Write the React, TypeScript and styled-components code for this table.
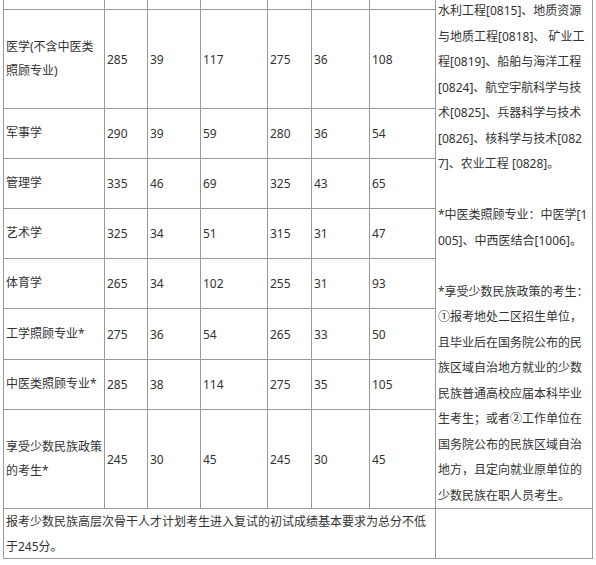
import React from "react";
import styled, { createGlobalStyle } from "styled-components";

const GlobalStyle = createGlobalStyle`
  html, body {
    margin: 0;
    padding: 0;
    background: #ffffff;
  }
  body {
    font-family: "Noto Sans", "Noto Sans CJK SC", sans-serif;
    color: #333333;
  }
`;

type Row = { name: string[]; scores: string[] };

const rows: Row[] = [
  { name: ["医学(不含中医类", "照顾专业)"], scores: ["285", "39", "117", "275", "36", "108"] },
  { name: ["军事学"], scores: ["290", "39", "59", "280", "36", "54"] },
  { name: ["管理学"], scores: ["335", "46", "69", "325", "43", "65"] },
  { name: ["艺术学"], scores: ["325", "34", "51", "315", "31", "47"] },
  { name: ["体育学"], scores: ["265", "34", "102", "255", "31", "93"] },
  { name: ["工学照顾专业*"], scores: ["275", "36", "54", "265", "33", "50"] },
  { name: ["中医类照顾专业*"], scores: ["285", "38", "114", "275", "35", "105"] },
  { name: ["享受少数民族政策", "的考生*"], scores: ["245", "30", "45", "245", "30", "45"] },
];

const notes: string[] = [
  "水利工程[0815]、地质资源",
  "与地质工程[0818]、 矿业工",
  "程[0819]、船舶与海洋工程",
  "[0824]、航空宇航科学与技",
  "术[0825]、兵器科学与技术",
  "[0826]、核科学与技术[082",
  "7]、农业工程 [0828]。",
  "",
  "*中医类照顾专业：中医学[1",
  "005]、中西医结合[1006]。",
  "",
  "*享受少数民族政策的考生：",
  "①报考地处二区招生单位，",
  "且毕业后在国务院公布的民",
  "族区域自治地方就业的少数",
  "民族普通高校应届本科毕业",
  "生考生；或者②工作单位在",
  "国务院公布的民族区域自治",
  "地方，且定向就业原单位的",
  "少数民族在职人员考生。",
];

const App: React.FC = () => {
  return (
    <>
      <GlobalStyle />
      <Sheet>
        {/* the row above is cut off by the crop, only its last pixels show */}
        {Array.from({ length: 7 }).map((_, i) => (
          <Cell key={`top-${i}`} />
        ))}
        <NotesCell>
          {notes.map((line, i) => (
            <NoteLine key={i}>{line || "\u00a0"}</NoteLine>
          ))}
        </NotesCell>

        {rows.map((row) => (
          <React.Fragment key={row.name.join("")}>
            <Cell $align="center">
              <CellText $lineHeight={24.5}>
                {row.name.map((part, i) => (
                  <span key={i}>
                    {part}
                    {i < row.name.length - 1 && <br />}
                  </span>
                ))}
              </CellText>
            </Cell>
            {row.scores.map((score, i) => (
              <Cell key={i} $align="center">
                <CellText>{score}</CellText>
              </Cell>
            ))}
          </React.Fragment>
        ))}

        <Cell $span={7} $align="flex-start">
          <FooterText>
            报考少数民族高层次骨干人才计划考生进入复试的初试成绩基本要求为总分不低于245分。
          </FooterText>
        </Cell>
        <Cell />
      </Sheet>
    </>
  );
};

const Sheet = styled.div`
  margin-left: 3px;
  width: 590px;
  display: grid;
  grid-template-columns: 101px 43px 53px 67px 44px 58px 66px 157px;
  grid-template-rows: 10px 99px 50px 50px 50px 50px 51px 50px 99px 50px;
  border-left: 1px solid #999999;
  box-sizing: border-box;
  font-size: 12px;
`;

const Cell = styled.div<{ $span?: number; $align?: string }>`
  box-sizing: border-box;
  border-right: 1px solid #999999;
  border-bottom: 1px solid #999999;
  display: flex;
  align-items: ${(p) => p.$align || "center"};
  padding: 0 2px;
  overflow: hidden;
  ${(p) => (p.$span ? `grid-column: span ${p.$span};` : "")}
`;

const CellText = styled.div<{ $lineHeight?: number }>`
  line-height: ${(p) => p.$lineHeight || 25}px;
  white-space: nowrap;
`;

const NotesCell = styled.div`
  grid-column: 8;
  grid-row: 1 / span 9;
  box-sizing: border-box;
  border-right: 1px solid #999999;
  border-bottom: 1px solid #999999;
  display: flex;
  flex-direction: column;
  justify-content: flex-end;
  overflow: hidden;
  padding: 0 2px;
`;

const NoteLine = styled.div`
  line-height: 25.5px;
  white-space: nowrap;
`;

const FooterText = styled.div`
  line-height: 25px;
`;

export default App;
